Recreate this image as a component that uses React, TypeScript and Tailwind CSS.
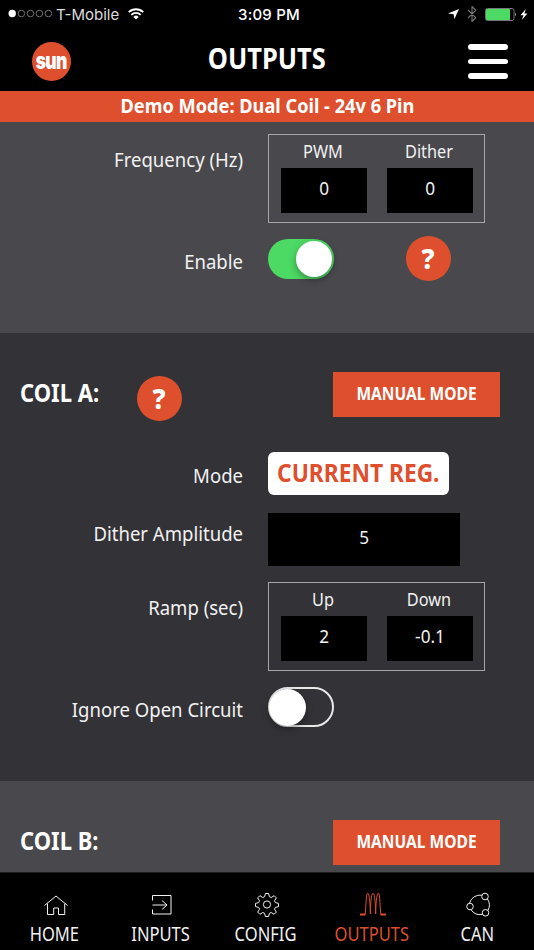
import { Bluetooth } from "lucide-react";
import type { ReactNode } from "react";

interface Field {
  name: string;
  value: string;
}

interface RowProps {
  label: string;
  labelClass: string;
  className: string;
  children: ReactNode;
}

function StatusBar() {
  return (
    <div className="h-7 flex items-center justify-between pl-2 pr-1.5 font-['Inter',sans-serif] text-[15px] leading-none">
      <div className="flex items-center w-[200px]">
        <svg width="45" height="10" viewBox="0 0 45 10" fill="none">
          <circle cx="4.2" cy="4.5" r="3.7" fill="#fff" />
          <g stroke="#8a8a8a" strokeWidth="0.8">
            <circle cx="13.4" cy="4.5" r="3.3" />
            <circle cx="22.4" cy="4.5" r="3.3" />
            <circle cx="31.4" cy="4.5" r="3.3" />
            <circle cx="40.4" cy="4.5" r="3.3" />
          </g>
        </svg>
        <span className="ml-[3px] mr-2 w-[64px] whitespace-nowrap text-[#ddd]">T-Mobile</span>
        <svg width="16" height="12" viewBox="0 0 16 12" fill="none" stroke="#fff" strokeWidth="1.8">
          <path d="M0.8 4.2a10.3 10.3 0 0 1 14.4 0" />
          <path d="M3.3 6.9a6.7 6.7 0 0 1 9.4 0" />
          <path d="M8 11.5 5.4 8.9a3.7 3.7 0 0 1 5.2 0z" fill="#fff" stroke="none" />
        </svg>
      </div>
      <span className="ml-0.5 font-medium text-[15px] tracking-[0.2px]">3:09 PM</span>
      <div className="flex items-center justify-end w-[200px]">
        <svg width="11" height="10" viewBox="0 0 11 10" fill="#fff">
          <path d="M11 0 6.4 10 5.6 5.2 0 4.6z" />
        </svg>
        <Bluetooth className="ml-1 text-[#747474]" size={18} strokeWidth={1.5} />
        <svg className="ml-1" width="33" height="13" viewBox="0 0 33 13">
          <rect x="0.5" y="0.5" width="28.5" height="12" rx="2" fill="none" stroke="#777" />
          <rect x="1" y="1" width="24" height="11" rx="1" fill="#4cd964" />
          <path d="M30 4.5q2 2 0 4z" fill="#999" />
        </svg>
        <svg className="ml-[2px]" width="8" height="11" viewBox="0 0 8 11" fill="#fff">
          <path d="M5.8 0 0.5 6.2h3L1.8 11 7.4 4.5h-3z" />
        </svg>
      </div>
    </div>
  );
}

function Help({ className }: { className: string }) {
  return (
    <button className={`flex justify-center size-[45px] rounded-full bg-[#de4f2d] text-[29px] font-extrabold leading-[43px] ${className}`}>
      <span className="scale-x-[.92]">?</span>
    </button>
  );
}

function Toggle({ on }: { on: boolean }) {
  return on ? (
    <div className="flex justify-end items-center w-[66px] h-10 rounded-full bg-[#4cd964] p-[2px]">
      <div className="size-9 rounded-full bg-white shadow-[0_3px_7px_rgba(0,0,0,0.35)]" />
    </div>
  ) : (
    <div className="flex items-center w-[66px] h-10 rounded-full border-2 border-[#e8e8e8]">
      <div className="size-[37px] -ml-px rounded-full bg-white shadow-[0_3px_7px_rgba(0,0,0,0.35)]" />
    </div>
  );
}

function Row({ label, labelClass, className, children }: RowProps) {
  return (
    <div className={`flex items-start ${className}`}>
      <div className={`w-[243px] mr-[25px] shrink-0 text-right text-[20px] leading-6 text-[#f2f2f2] whitespace-nowrap origin-right scale-x-[.927] ${labelClass}`}>
        {label}
      </div>
      {children}
    </div>
  );
}

function FieldPair({ fields }: { fields: Field[] }) {
  return (
    <div className="flex justify-between w-[217px] h-[89px] border-[1.5px] border-[#a6a6a8] pl-3 pr-[11px] text-[18.5px] text-[#f2f2f2] text-center">
      {fields.map((field) => (
        <div key={field.name} className="w-[86px]">
          <div className="h-[33px] leading-[31px] -ml-0.5 scale-x-[.88]">{field.name}</div>
          <div className="h-[45px] bg-black leading-[39px]">
            <span className="inline-block scale-x-[.93]">{field.value}</span>
          </div>
        </div>
      ))}
    </div>
  );
}

function CoilHeader({ title, help }: { title: string; help?: boolean }) {
  return (
    <div className="flex items-start h-[50px] pl-5">
      <h2 className="w-[115px] pt-1 text-[25px] leading-8 font-bold whitespace-nowrap origin-left scale-x-[.88]">{title}</h2>
      {help && <Help className="mt-1 ml-0.5" />}
      <button className="flex justify-center ml-auto mr-[34px] w-[167px] h-[45px] bg-[#de4f2d] text-[18.5px] leading-[41px] font-bold whitespace-nowrap">
        <span className="scale-x-[.84]">MANUAL MODE</span>
      </button>
    </div>
  );
}

const tabs = [
  {
    name: "HOME",
    icon: <path d="M1.5 13.5 13 4l11.5 9.5M4.5 11.5V22.5h6.2V16h4.8v6.500h6.200V11.500" />,
  },
  {
    name: "INPUTS",
    icon: <path d="M4.5 8.5V3.500h18.500v18.500H4.500V17.500M4.500 13h14.500M14 8.500l5 4.500-5 4.500" />,
  },
  {
    name: "CONFIG",
    icon: (
      <>
        <circle cx="13" cy="12.5" r="3.6" />
        <path d="M11.400 1.500h3.200l.8 3.200 1.800.8 2.900-1.800 2.200 2.200-1.800 2.900.8 1.800 3.200.8v3.200l-3.200.8-.8 1.800 1.800 2.900-2.200 2.200-2.900-1.800-1.800.8-.8 3.200h-3.200l-.8-3.200-1.800-.8-2.900 1.800-2.200-2.200 1.800-2.900-.8-1.800-3.200-.8v-3.200l3.200-.8.8-1.800-1.800-2.900 2.200-2.200 2.900 1.800 1.800-.8z" strokeLinejoin="round" />
      </>
    ),
  },
  {
    name: "OUTPUTS",
    icon: (
      <>
        <path d="M5 22.500C6.200 17 5.800 1.200 7.700 1.200S10.200 14 10.350 22C10.500 14 11.100 1.200 13 1.200S15.500 14 15.650 22C15.800 14 16.400 1.200 18.300 1.200S19.800 17 21 22.500" />
        <path d="M0 22.500h5.500M20.500 22.500H26" strokeWidth="2" />
      </>
    ),
  },
  {
    name: "CAN",
    icon: (
      <>
        <circle cx="5" cy="14.5" r="3.3" />
        <circle cx="20" cy="4.5" r="3.3" />
        <circle cx="20.5" cy="20.8" r="3.3" />
        <path d="M4.500 11.200A11 11 0 0 1 16.900 3.200M22.400 6.900A11 11 0 0 1 22.900 18.500M17.400 22.300A11 11 0 0 1 6 17.700" />
      </>
    ),
  },
];

export default function App() {
  return (
    <div className="flex flex-col w-[534px] h-[950px] overflow-hidden bg-black text-white font-['Noto_Sans',sans-serif]">
      <StatusBar />

      {/* Title bar */}
      <header className="flex items-start justify-between h-[63px] pl-8 pr-[26px]">
        <div className="flex items-center justify-center mt-[14px] size-[39px] rounded-full bg-[#de4f2d]">
          <span className="font-['Inter',sans-serif] font-black text-[23px] leading-none -mt-[1px] tracking-[-1px] scale-x-[.76]">
            sun
          </span>
        </div>
        <h1 className="mt-[10px] ml-[-5px] text-[28px] leading-10 font-bold scale-x-[.91]">OUTPUTS</h1>
        <div className="flex flex-col gap-[9px] mt-4">
          <div className="w-10 h-[5.5px] rounded-full bg-white" />
          <div className="w-10 h-[5.5px] rounded-full bg-white" />
          <div className="w-10 h-[5.5px] rounded-full bg-white" />
        </div>
      </header>

      <div className="h-[31px] bg-[#de4f2d] text-center text-[19px] leading-[31px] font-bold">
        <span className="inline-block scale-x-[.958]">Demo Mode: Dual Coil - 24v 6 Pin</span>
      </div>

      {/* Settings */}
      <section className="h-[211px] bg-[#49484d] pt-[12px]">
        <Row label="Frequency (Hz)" labelClass="pt-[14px]" className="h-[102px]">
          <FieldPair fields={[{ name: "PWM", value: "0" }, { name: "Dither", value: "0" }]} />
        </Row>
        <Row label="Enable" labelClass="pt-[14px]" className="">
          <div className="mt-[3px]">
            <Toggle on />
          </div>
          <Help className="ml-[72px]" />
        </Row>
      </section>

      <section className="h-[448px] bg-[#323237] pt-[39px]">
        <CoilHeader title="COIL A:" help />
        <Row label="Mode" labelClass="pt-3" className="h-[61px] mt-[30px]">
          <div className="w-[181px] h-[43px] rounded-md bg-white text-center text-[25px] leading-[41px] font-bold text-[#de4f2d] whitespace-nowrap">
            <span className="inline-block scale-x-[.91]">CURRENT REG.</span>
          </div>
        </Row>
        <Row label="Dither Amplitude" labelClass="pt-[9px]" className="h-[69px]">
          <div className="w-[192px] h-[53px] bg-black text-center text-[18.5px] leading-[47px] text-[#f2f2f2]">
            <span className="inline-block scale-x-[.93]">5</span>
          </div>
        </Row>
        <Row label="Ramp (sec)" labelClass="pt-[14px]" className="h-[105px]">
          <FieldPair fields={[{ name: "Up", value: "2" }, { name: "Down", value: "-0.1" }]} />
        </Row>
        <Row label="Ignore Open Circuit" labelClass="pt-[11px]" className="">
          <Toggle on={false} />
        </Row>
      </section>

      <section className="h-[91px] bg-[#49484d] pt-[39px]">
        <CoilHeader title="COIL B:" />
      </section>

      {/* Bottom tabs */}
      <nav className="grid grid-cols-5 h-[78px] pl-[2px] pr-1 border-t border-[#1c1c1e]">
        {tabs.map((tab) => (
          <div
            key={tab.name}
            className={`flex flex-col items-center pt-[19px] ${tab.name === "OUTPUTS" ? "text-[#de4f2d]" : "text-[#f2f2f2]"}`}
          >
            <svg className="ml-[2px]" width="26" height="26" viewBox="0 0 26 26" fill="none" stroke="currentColor" strokeWidth="1">
              {tab.icon}
            </svg>
            <span className="text-[19px] leading-6 mt-1 scale-x-[.87]">{tab.name}</span>
          </div>
        ))}
      </nav>
    </div>
  );
}
